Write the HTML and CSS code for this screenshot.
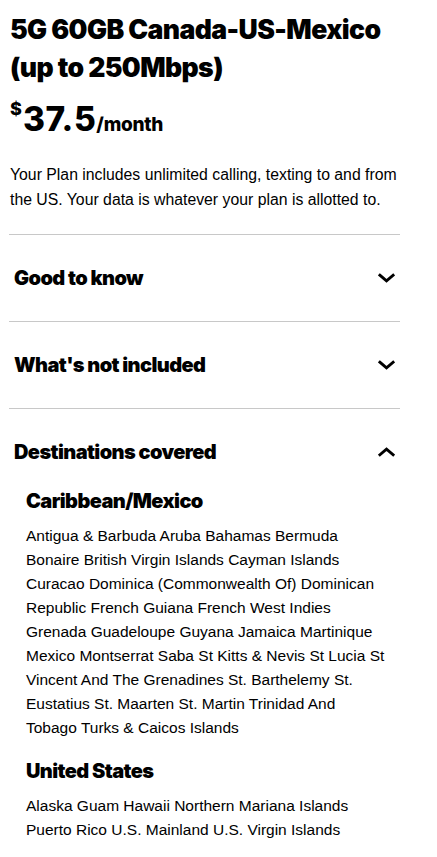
FILE: index.html
```html
<!DOCTYPE html>
<html>
<head>
<meta charset="utf-8">
<link rel="stylesheet" href="styles.css">
</head>
<body>
<main class="plan">
  <h1 class="title">5G 60GB Canada-US-Mexico (up to 250Mbps)</h1>
  <div class="price"><sup class="cur">$</sup><span class="amt">37.5</span><span class="per">/month</span></div>
  <p class="desc">Your Plan includes unlimited calling, texting to and from the US. Your data is whatever your plan is allotted to.</p>

  <section class="acc">
    <div class="acc-head"><span>Good to know</span>
      <svg class="chev" viewBox="0 0 18 10"><path d="M2 2 L9 8 L16 2" /></svg>
    </div>
  </section>
  <section class="acc">
    <div class="acc-head"><span>What's not included</span>
      <svg class="chev" viewBox="0 0 18 10"><path d="M2 2 L9 8 L16 2" /></svg>
    </div>
  </section>
  <section class="acc open">
    <div class="acc-head"><span>Destinations covered</span>
      <svg class="chev" viewBox="0 0 18 10"><path d="M2 8 L9 2 L16 8" /></svg>
    </div>
    <div class="acc-body">
      <h3 class="region">Caribbean/Mexico</h3>
      <p class="list">Antigua &amp; Barbuda Aruba Bahamas Bermuda Bonaire British Virgin Islands Cayman Islands Curacao Dominica (Commonwealth Of) Dominican Republic French Guiana French West Indies Grenada Guadeloupe Guyana Jamaica Martinique Mexico Montserrat Saba St Kitts &amp; Nevis St Lucia St Vincent And The Grenadines St. Barthelemy St. Eustatius St. Maarten St. Martin Trinidad And Tobago Turks &amp; Caicos Islands</p>
      <h3 class="region">United States</h3>
      <p class="list">Alaska Guam Hawaii Northern Mariana Islands Puerto Rico U.S. Mainland U.S. Virgin Islands</p>
    </div>
  </section>
</main>
</body>
</html>
```

FILE: styles.css
```css
* { box-sizing: border-box; }
body {
  margin: 0;
  background: #fff;
  color: #000;
  font-family: "Liberation Sans", Arial, sans-serif;
}
.plan {
  width: 400px;
  padding: 10px 0 0 9px;
}
.title {
  margin: 0 0 0 1px;
  font-family: Inter, "Liberation Sans", sans-serif;
  font-weight: 900;
  font-size: 26.6px;
  line-height: 38px;
  letter-spacing: -0.6px;
}
.price {
  margin: 13px 0 0 1px;
  display: flex;
  align-items: baseline;
  font-family: Inter, "Liberation Sans", sans-serif;
  font-weight: 800;
  height: 40px;
}
.cur {
  font-size: 18px;
  align-self: flex-start;
  line-height: 20px;
}
.amt {
  font-size: 33.5px;
  letter-spacing: 0.6px;
  line-height: 40px;
  margin-left: 1px;
}
.per {
  font-size: 19px;
  letter-spacing: -0.3px;
}
.desc {
  margin: 23px 0 0 1px;
  font-size: 15.8px;
  line-height: 25px;
  padding-bottom: 22px;
}
.acc {
  border-top: 1px solid #c8c8c8;
}
.acc-head {
  display: flex;
  justify-content: space-between;
  align-items: center;
  height: 86px;
  padding: 0 5px 0 5px;
  font-family: Inter, "Liberation Sans", sans-serif;
  font-weight: 900;
  font-size: 20px;
  letter-spacing: -0.6px;
}
.chev {
  width: 17px;
  height: 10px;
  fill: none;
  stroke: #000;
  stroke-width: 3;
  stroke-linecap: square;
}
.acc-body {
  padding: 0 0 0 17px;
  margin-top: -7px;
}
.region {
  margin: 0;
  font-family: Inter, "Liberation Sans", sans-serif;
  font-weight: 900;
  font-size: 20px;
  letter-spacing: -0.6px;
  line-height: 26px;
}
.list {
  margin: 10px 0 18px 0;
  font-size: 15.5px;
  line-height: 24px;
  width: 360px;
}
```
